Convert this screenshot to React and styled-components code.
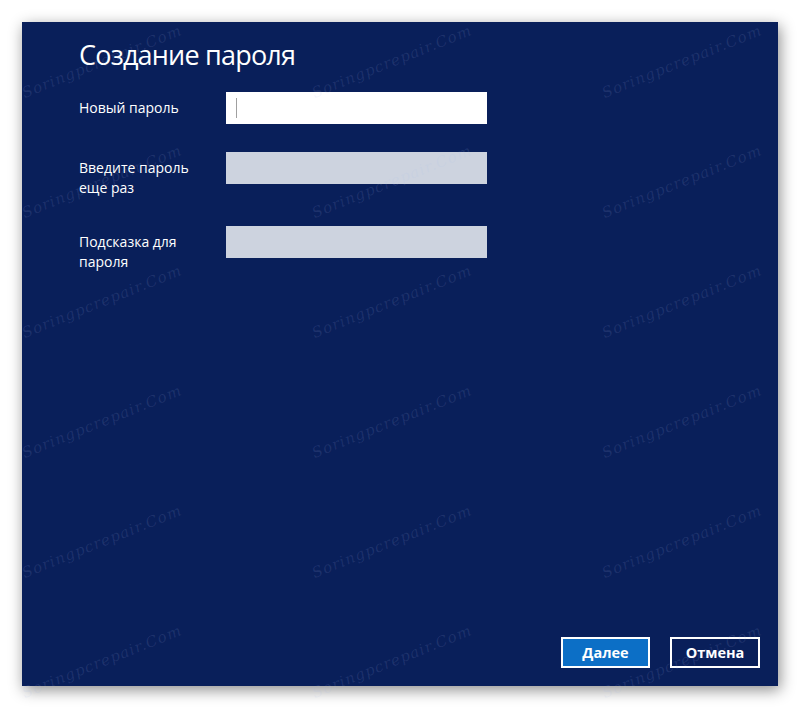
import React from 'react';
import styled, { createGlobalStyle } from 'styled-components';

const GlobalStyle = createGlobalStyle`
  html, body {
    margin: 0;
    padding: 0;
    background: #ffffff;
  }
  body {
    font-family: "Open Sans", "Noto Sans", "Liberation Sans", sans-serif;
  }
`;

const Page = styled.div`
  position: relative;
  width: 800px;
  height: 708px;
  padding: 22px;
  box-sizing: border-box;
  overflow: hidden;
`;

const Dialog = styled.div`
  display: flex;
  flex-direction: column;
  width: 756px;
  height: 664px;
  box-sizing: border-box;
  padding: 0 18px 18px 57px;
  background: #091f5a;
  color: #ffffff;
  box-shadow: 2px 4px 14px rgba(0, 0, 0, 0.45);
`;

const Title = styled.h1`
  margin: 0;
  padding-top: 15px;
  font-size: 27px;
  font-weight: 400;
  line-height: 36px;
  letter-spacing: -0.8px;
`;

const Form = styled.div`
  display: flex;
  flex-direction: column;
  gap: 28px;
  margin-top: 19px;
`;

const Row = styled.div`
  display: grid;
  grid-template-columns: 147px 261px;
  align-items: start;
`;

const Label = styled.div`
  padding-top: 6px;
  width: 120px;
  font-size: 14px;
  line-height: 20px;
`;

const Field = styled.div`
  position: relative;
  height: 32px;
  background: ${p => (p.active ? '#ffffff' : '#cdd3df')};
`;

const Caret = styled.span`
  position: absolute;
  left: 10px;
  top: 6px;
  width: 1px;
  height: 20px;
  background: #a0a0a0;
`;

const Actions = styled.div`
  display: flex;
  justify-content: flex-end;
  gap: 20px;
  margin-top: auto;
`;

const Button = styled.button`
  width: ${p => (p.primary ? '89px' : '90px')};
  height: 31px;
  padding: 0;
  border: 2px solid #ffffff;
  background: ${p => (p.primary ? '#0c6fc6' : 'transparent')};
  color: #ffffff;
  font-family: "Open Sans", "Noto Sans", sans-serif;
  font-size: 14.5px;
  font-weight: 700;
`;

const Watermarks = styled.div`
  position: absolute;
  inset: 0;
  display: grid;
  grid-template-columns: repeat(3, 290px);
  grid-auto-rows: 120px;
  padding: 10px 0 0 26px;
  pointer-events: none;
`;

const Mark = styled.span`
  align-self: end;
  display: block;
  width: 170px;
  transform-origin: left bottom;
  transform: translateY(-28px) rotate(-22deg);
  font-family: "DejaVu Serif", serif;
  font-style: italic;
  font-size: 15px;
  letter-spacing: 1px;
  color: rgba(170, 190, 235, 0.13);
  white-space: nowrap;
`;

const fields = [
  { label: 'Новый пароль', active: true },
  { label: 'Введите пароль еще раз' },
  { label: 'Подсказка для пароля' },
];

export default function App() {
  return (
    <Page>
      <GlobalStyle />
      <Dialog>
        <Title>Создание пароля</Title>
        <Form>
          {fields.map(f => (
            <Row key={f.label}>
              <Label>{f.label}</Label>
              <Field active={f.active}>{f.active && <Caret />}</Field>
            </Row>
          ))}
        </Form>
        <Actions>
          <Button primary>Далее</Button>
          <Button>Отмена</Button>
        </Actions>
      </Dialog>
      <Watermarks>
        {Array.from({ length: 18 }).map((_, i) => (
          <Mark key={i}>Soringpcrepair.Com</Mark>
        ))}
      </Watermarks>
    </Page>
  );
}
